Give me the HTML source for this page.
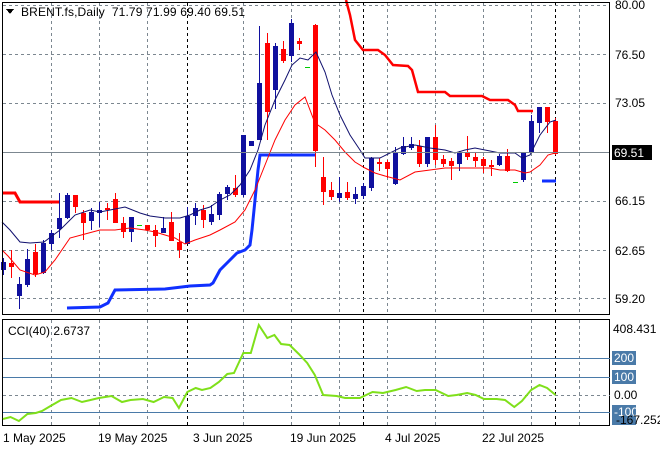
<!DOCTYPE html>
<html><head><meta charset="utf-8"><style>
html,body{margin:0;padding:0;background:#fff;width:660px;height:450px;overflow:hidden}
svg text{font-family:"Liberation Sans",sans-serif;font-size:12px;fill:#000;white-space:pre}
</style></head><body>
<svg id="s" width="660" height="450" xmlns="http://www.w3.org/2000/svg" shape-rendering="crispEdges">
<rect x="0" y="0" width="660" height="450" fill="#fff"/>
<g id="grid" stroke="#7c8790" stroke-dasharray="3,3" stroke-width="1"></g>
<g id="cand"></g>
<g shape-rendering="auto" fill="none">
<polyline stroke="#ff0000" stroke-width="3" points="3,193 15,193 20,202 59,202"/>
<polyline stroke="#ff0000" stroke-width="2.5" points="346,0 350,15 352,25 355,40 363,50 378,50 385,55 393,65 408,66 412,70 418,92 445,92 450,96 482,96 490,100 508,100 515,105 518,111 533,111"/>
<polyline stroke="#1030ff" stroke-width="3" points="67,308 100,307 108,303 115,290 165,289 190,286 210,285 213,283 220,270 230,260 237,253 245,250 250,245 252,230 255,200 258,170 260,155 315,155"/>
<polyline stroke="#1030ff" stroke-width="3" points="542,181 556,181"/>
<polyline stroke="#10106e" stroke-width="1" points="2,222 10,230 20,242 30,243 44,242 60,230 75,215 90,210 100,212 110,210 125,207 140,213 150,216 165,218 180,218 190,215 200,210 210,207 220,200 230,195 240,185 250,170 258,150 265,125 275,100 285,80 292,65 300,58 308,60 316,52 325,72 332,95 340,115 350,135 360,150 365,158 380,158 390,153 400,148 415,145 430,148 445,150 455,153 465,150 475,148 485,150 500,153 515,153 522,158 530,155 540,135 550,122 556,120"/>
<polyline stroke="#ff0000" stroke-width="1" points="2,250 8,256 20,270 35,275 45,272 55,260 70,238 85,234 100,230 115,230 130,228 145,230 155,232 165,235 175,238 185,244 195,240 210,235 220,230 235,222 245,210 255,190 265,165 275,140 285,120 295,105 305,97 315,123 325,130 335,140 345,152 355,162 365,168 375,173 385,176 400,180 415,172 430,170 445,168 460,168 475,168 490,168 500,170 515,170 525,173 530,172 540,165 548,155 555,153"/>
</g>
<line x1="2" y1="152.5" x2="610" y2="152.5" stroke="#7c8790" stroke-width="1"/>
<rect x="2.5" y="2.5" width="607" height="312" fill="none" stroke="#000"/>
<rect x="2.5" y="319.5" width="607" height="106" fill="none" stroke="#000"/>
<line x1="3" y1="358.5" x2="610" y2="358.5" stroke="#4a7aa8"/>
<line x1="3" y1="377.5" x2="610" y2="377.5" stroke="#4a7aa8"/>
<line x1="3" y1="395.5" x2="610" y2="395.5" stroke="#7c8790" stroke-dasharray="3,3"/>
<line x1="3" y1="412.5" x2="610" y2="412.5" stroke="#4a7aa8"/>
<polyline shape-rendering="auto" fill="none" stroke="#7fe01a" stroke-width="2" points="3,419 10.5,417 18.9,421 27.4,414 35.8,413 42.1,411 50.5,406 61,400 71.5,398 82,402 90.5,400 98.9,398 111.5,396 122,402 130.5,400 143,399 153.6,402 164,397 172.6,398 178.9,408 187.3,392 195.7,388 202,390 210.4,388 218.9,382 227.3,374 234,373 243.3,353 250.8,353 258.8,325 267.3,338 274.4,335 281.1,344 289.6,345 298.8,354 307.2,363 314.8,375 323.2,395 336.7,396 345.1,398 359.8,398 372.5,392 383,393 395.6,390 406.1,387 416.7,391 425,390 435.6,390 448.2,396 456.6,395 467.2,393 475.6,395 484,399 496.6,399 505,400 514.3,407 521.9,401 531.1,390 539.5,385 547.1,388 555.6,395"/>
<path d="M6 9 L14 9 L10 14 Z" fill="#000"/>
<text x="21" y="16" textLength="224" lengthAdjust="spacing">BRENT.fs,Daily  71.79 71.99 69.40 69.51</text>
<text x="8" y="335">CCI(40) 2.6737</text>
<g>
<text x="615" y="9">80.00</text>
<text x="615" y="59">76.50</text>
<text x="615" y="107">73.05</text>
<text x="615" y="205">66.15</text>
<text x="615" y="255">62.65</text>
<text x="615" y="303">59.20</text>
<rect x="612" y="145" width="40" height="15" fill="#000"/>
<text x="614" y="157" style="fill:#fff">69.51</text>
<text x="613" y="333">408.431</text>
<rect x="612" y="351" width="24" height="14" fill="#4a7aa8"/>
<text x="614" y="362" style="fill:#fff">200</text>
<rect x="612" y="370" width="24" height="14" fill="#4a7aa8"/>
<text x="614" y="381" style="fill:#fff">100</text>
<text x="614" y="399">0.00</text>
<rect x="612" y="405" width="24" height="20" fill="#4a7aa8"/>
<text x="614" y="416" style="fill:#fff">-100</text>
<text x="616" y="424">-167.252</text>
</g>
<text x="3" y="442">1 May 2025</text>
<text x="98" y="442">19 May 2025</text>
<text x="193" y="442">3 Jun 2025</text>
<text x="290" y="442">19 Jun 2025</text>
<text x="385" y="442">4 Jul 2025</text>
<text x="482" y="442">22 Jul 2025</text>
</svg>
<script>
var NS="http://www.w3.org/2000/svg";
function el(p,t,a){var e=document.createElementNS(NS,t);for(var k in a)e.setAttribute(k,a[k]);p.appendChild(e);return e;}
var g=document.getElementById('grid');
[51,99,147,243,291,339,387,435,483,531,579].forEach(function(x){el(g,'line',{x1:x+.5,y1:3,x2:x+.5,y2:314});el(g,'line',{x1:x+.5,y1:320,x2:x+.5,y2:425});});
[187,363,555].forEach(function(x){el(g,'line',{x1:x+.5,y1:3,x2:x+.5,y2:314,stroke:'#000'});el(g,'line',{x1:x+.5,y1:320,x2:x+.5,y2:425,stroke:'#000'});});
[5,54,103,201,250,298].forEach(function(y){el(g,'line',{x1:3,y1:y+.5,x2:610,y2:y+.5});});
var C=[
['b',262,270,258,275],['r',263,267,250,278],['b',284,296,277,309],['b',259,285,249,287],['r',252,274,244,277],['b',243,273,240,274],['b',233,244,230,250],['b',218,229,193,238],['b',195,218,193,219],['r',195,207,195,213],
['r',213,223,210,240],['b',212,221,208,230],['b',210,213,202,227],['r',208,210,203,220],['r',199,223,193,223],['r',223,232,217,238],['b',217,232,217,242],['g',225,225,225,225],['r',225,230,225,230],['r',230,236,225,247],
['b',228,233,217,233],['r',222,241,212,241],['r',242,250,233,258],['b',216,244,207,244],['b',208,216,203,225],['r',210,220,205,228],['b',214,222,205,225],['b',194,215,192,220],['b',187,194,185,200],['r',188,195,175,197],
['b',135,195,135,197],['b',141,146,141,146],['b',83,140,26,140],['r',43,112,33,140],['b',46,90,43,109],['r',49,61,41,63],['b',23,56,19,62],['r',41,44,38,50],['g',67,67,67,67],['r',25,151,24,167],
['r',177,192,157,205],['r',190,197,182,200],['b',193,198,177,202],['r',192,198,182,200],['b',194,199,187,204],['b',186,196,183,199],['b',158,188,157,191],['r',162,164,158,171],['r',162,169,160,178],['b',152,184,147,185],
['b',146,154,137,155],['b',144,148,137,150],['r',146,164,140,167],['b',137,164,137,167],['r',137,160,125,165],['r',159,164,155,167],['r',161,166,158,180],['b',153,164,151,171],['r',153,157,136,160],['r',157,161,153,167],
['r',159,166,157,173],['r',165,166,160,176],['b',156,165,154,166],['r',156,171,149,172],['g',182,182,182,182],['b',153,180,152,182],['b',121,153,115,153],['b',107,123,107,133],['r',107,122,107,133],['r',121,154,118,155]];
var cg=document.getElementById('cand');
C.forEach(function(c,i){var x=3+8*i;var col=c[0]=='b'?'#10109e':(c[0]=='r'?'#ff0000':'#00cc00');
if(c[0]=='g'){el(cg,'rect',{x:x-2,y:c[1],width:5,height:1,fill:col});return;}
el(cg,'rect',{x:x,y:c[3],width:1,height:Math.max(1,c[4]-c[3]),fill:col});
el(cg,'rect',{x:x-2,y:c[1],width:5,height:Math.max(2,c[2]-c[1]),fill:col});});
</script>
</body></html>
